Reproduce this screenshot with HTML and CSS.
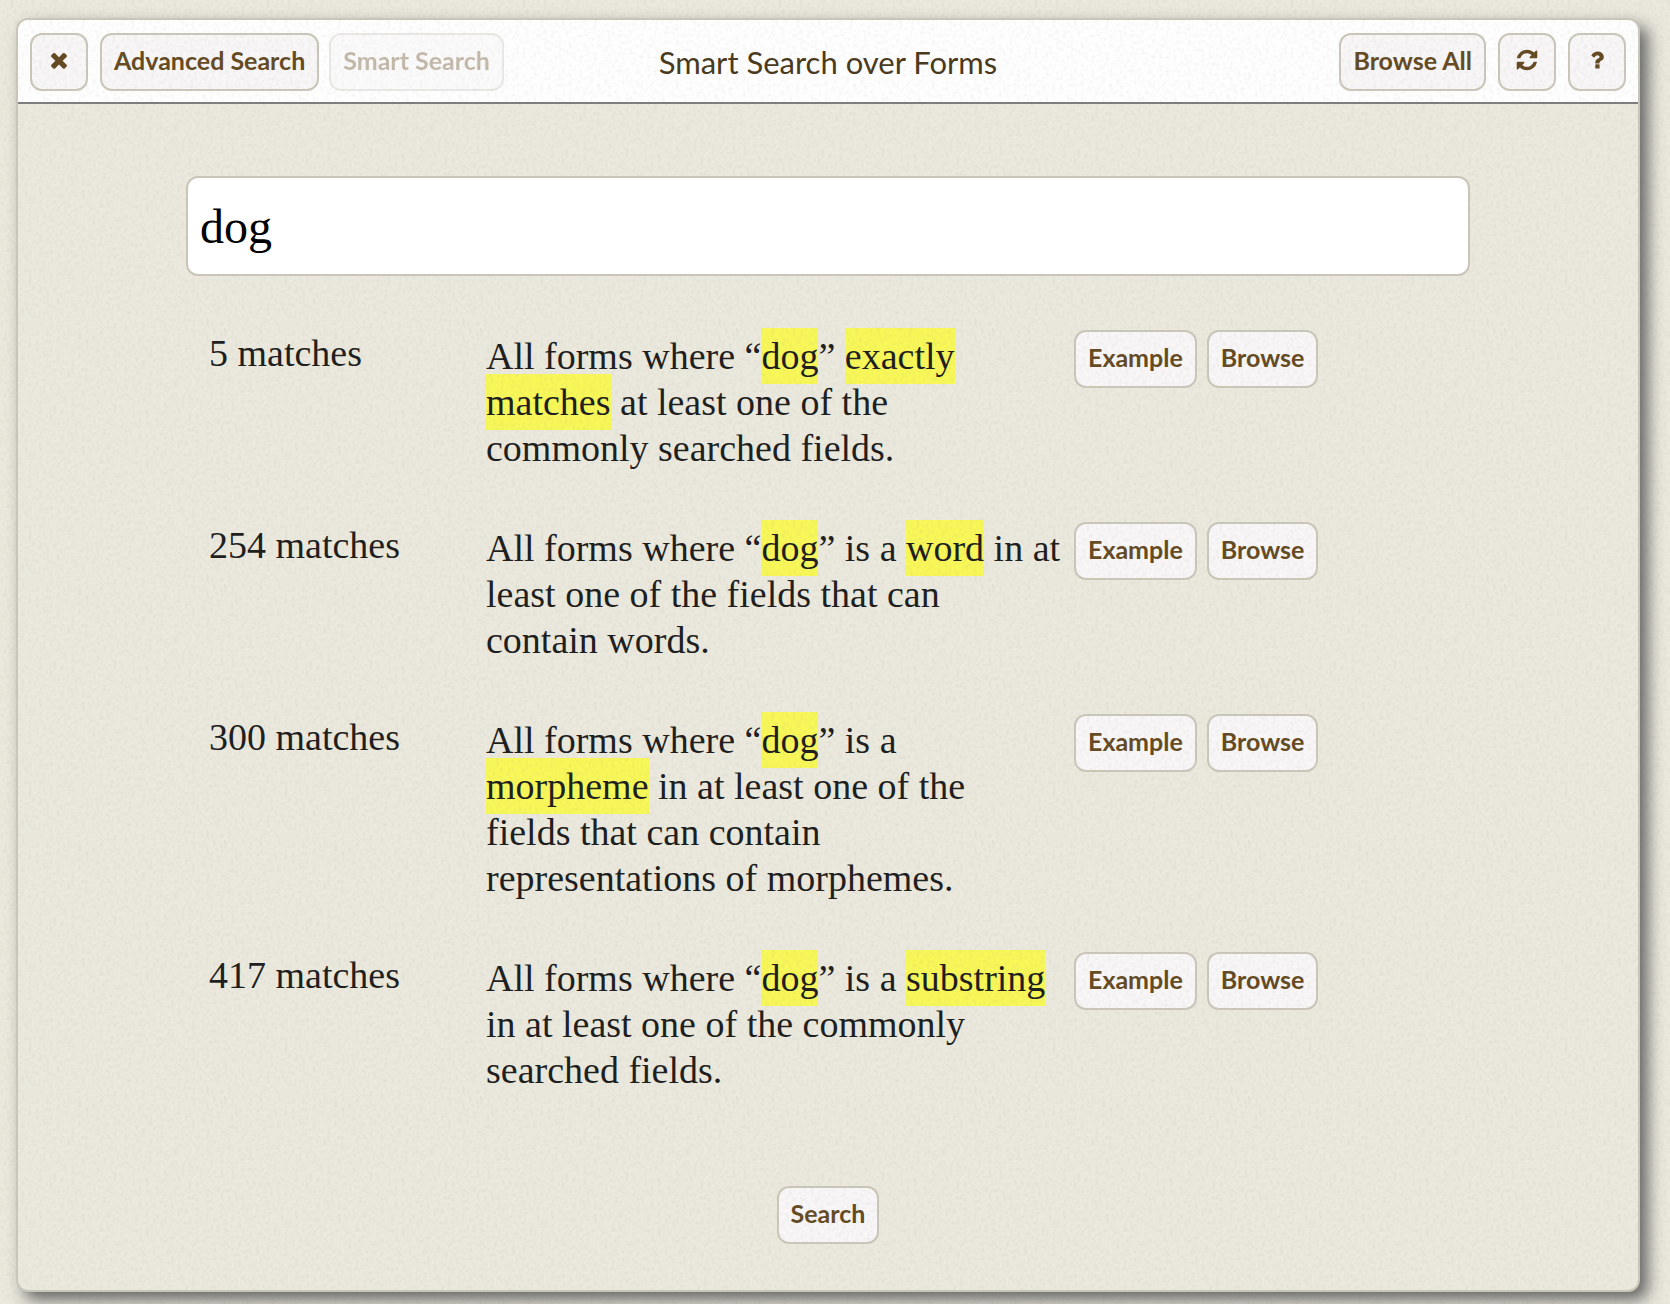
FILE: index.html
```html
<!DOCTYPE html>
<html lang="en">
<head>
<meta charset="utf-8">
<meta name="viewport" content="width=device-width, initial-scale=1">
<title>Smart Search over Forms</title>
<link rel="stylesheet" href="styles.css">
</head>
<body>
<main class="panel">
  <header class="panel-header">
    <div class="toolbar">
      <button class="btn btn-icon" type="button" aria-label="Close">
        <svg class="icon" viewBox="0 0 1792 1792" aria-hidden="true"><path d="M1490 1322q0 40-28 68l-136 136q-28 28-68 28t-68-28l-294-294-294 294q-28 28-68 28t-68-28l-136-136q-28-28-28-68t28-68l294-294-294-294q-28-28-28-68t28-68l136-136q28-28 68-28t68 28l294 294 294-294q28-28 68-28t68 28l136 136q28 28 28 68t-28 68l-294 294 294 294q28 28 28 68z"/></svg>
      </button>
      <div class="button-group">
        <button class="btn" type="button">Advanced Search</button>
        <button class="btn" type="button" disabled>Smart Search</button>
      </div>
    </div>
    <h1 class="title">Smart Search over Forms</h1>
    <div class="toolbar toolbar-end">
      <button class="btn" type="button">Browse All</button>
      <button class="btn btn-icon" type="button" aria-label="Refresh">
        <svg class="icon" viewBox="0 0 1792 1792" aria-hidden="true"><path d="M1639 1056q0 5-1 7-64 268-268 434.500t-478 166.500q-146 0-282.500-55t-243.500-157l-129 129q-19 19-45 19t-45-19-19-45v-448q0-26 19-45t45-19h448q26 0 45 19t19 45-19 45l-137 137q71 66 161 102t187 36q134 0 250-65t186-179q11-17 53-117 8-23 30-23h192q13 0 22.500 9.500t9.500 22.500zm25-800v448q0 26-19 45t-45 19h-448q-26 0-45-19t-19-45 19-45l138-138q-148-137-349-137-134 0-250 65t-186 179q-11 17-53 117-8 23-30 23h-199q-13 0-22.500-9.500t-9.500-22.500v-7q65-268 270-434.500t480-166.500q146 0 284 55.500t245 156.500l130-129q19-19 45-19t45 19 19 45z"/></svg>
      </button>
      <button class="btn btn-icon" type="button" aria-label="Help">
        <svg class="icon" viewBox="0 0 1792 1792" aria-hidden="true"><path d="M1088 1256v240q0 16-12 28t-28 12h-240q-16 0-28-12t-12-28v-240q0-16 12-28t28-12h240q16 0 28 12t12 28zm316-600q0 54-15.500 101t-35 76.500-55 59.500-57.500 43.500-61 35.500q-41 23-68.500 65t-27.500 67q0 17-12 32.500t-28 15.500h-240q-15 0-25.500-18.500t-10.500-37.500v-45q0-83 65-156.500t143-108.500q59-27 84-56t25-76q0-42-46.500-74t-107.500-32q-65 0-108 29-35 25-107 115-13 16-31 16-12 0-25-8l-164-125q-13-10-15.500-25t5.500-28q160-266 464-266 80 0 161 31t146 83 106 127.500 41 158.500z"/></svg>
      </button>
    </div>
  </header>
  <form class="search">
    <input class="search-input" type="text" value="dog" aria-label="Search terms">
    <ul class="results">
      <li class="result">
        <span class="count">5 matches</span>
        <p class="description">All forms where “<mark>dog</mark>” <mark>exactly matches</mark> at least one of the commonly&nbsp;searched fields.</p>
        <div class="button-group"><button class="btn" type="button">Example</button><button class="btn" type="button">Browse</button></div>
      </li>
      <li class="result">
        <span class="count">254 matches</span>
        <p class="description">All forms where “<mark>dog</mark>” is a <mark>word</mark> in at least one of the fields that can contain&nbsp;words.</p>
        <div class="button-group"><button class="btn" type="button">Example</button><button class="btn" type="button">Browse</button></div>
      </li>
      <li class="result">
        <span class="count">300 matches</span>
        <p class="description">All forms where “<mark>dog</mark>” is a <mark>morpheme</mark> in at least one of the fields&nbsp;that can contain representations&nbsp;of&nbsp;morphemes.</p>
        <div class="button-group"><button class="btn" type="button">Example</button><button class="btn" type="button">Browse</button></div>
      </li>
      <li class="result">
        <span class="count">417 matches</span>
        <p class="description">All forms where “<mark>dog</mark>” is a <mark>substring</mark> in at least one of the commonly searched fields.</p>
        <div class="button-group"><button class="btn" type="button">Example</button><button class="btn" type="button">Browse</button></div>
      </li>
    </ul>
    <button class="btn search-submit" type="submit">Search</button>
  </form>
</main>
</body>
</html>
```
FILE: styles.css
```css
:root {
  --line: #c9c5b9;
  --brown: #654b24;
  --ui: "Trebuchet MS", Lato, sans-serif;
  --text: "Gentium Basic", "Liberation Serif", serif;
  /* fine paper grain */
  --grain: url("data:image/svg+xml,%3Csvg xmlns='http://www.w3.org/2000/svg' width='256' height='256'%3E%3Cfilter id='g' x='0' y='0' width='100%25' height='100%25'%3E%3CfeTurbulence type='fractalNoise' baseFrequency='.28' numOctaves='2' seed='4' stitchTiles='stitch'/%3E%3CfeColorMatrix values='0 0 0 0 .25 0 0 0 0 .25 0 0 0 0 .23 .2 0 0 0 -.08'/%3E%3C/filter%3E%3Crect width='256' height='256' filter='url(%23g)'/%3E%3C/svg%3E");
}

* { box-sizing: border-box; }

body {
  margin: 0;
  min-height: 100vh;
  padding: 18px 30px 12px 16px;
  background: #ebe9dd var(--grain);
  color: #1f1f1f;
  font: 38px/46px var(--text);
}

.panel {
  border: 2px solid var(--line);
  border-radius: 12px;
  background: #ebe9dd var(--grain);
  box-shadow: 8px 8px 16px #666;
}

.panel-header {
  display: grid;
  grid-template-columns: 1fr auto 1fr;
  align-items: center;
  padding: 13px 12px 11px;
  border-bottom: 2px solid #807e7c;
  border-radius: 10px 10px 0 0;
  background: #fff var(--grain);
}

.toolbar { display: flex; gap: 12px; }
.toolbar-end { justify-content: flex-end; }
.button-group { display: flex; align-items: flex-start; gap: 10px; }

.title {
  margin: 0;
  color: #4a3a20;
  font: 400 31px/40px var(--ui);
}

.btn {
  display: flex;
  align-items: center;
  justify-content: center;
  height: 58px;
  padding: 0 12px 4px;
  border: 2px solid var(--line);
  border-radius: 12px;
  background: #f8f6f6 var(--grain);
  color: var(--brown);
  font: 700 25px/32px var(--ui);
  white-space: nowrap;
}
.btn:disabled { opacity: .38; }
.btn-icon { width: 58px; padding: 0 0 4px; }
.icon { width: 24px; height: 24px; fill: currentColor; }

.search {
  display: flex;
  flex-direction: column;
  padding: 72px 168px 46px;
}

.search-input {
  width: 100%;
  height: 100px;
  padding: 0 12px;
  border: 2px solid var(--line);
  border-radius: 12px;
  background: #fff;
  color: #000;
  font: 48px/60px var(--text);
}

.results {
  display: flex;
  flex-direction: column;
  gap: 51px;
  margin: 54px 0 93px;
  padding: 0 23px;
  list-style: none;
}

.result {
  display: grid;
  grid-template-columns: 277fr 588fr 373fr;
}

.description {
  margin: 0;
  padding: 3px 11px 0 0;
}

mark {
  padding: 7px 0;
  background: #f8f758 var(--grain);
  color: inherit;
}

.search-submit { align-self: center; }
```
